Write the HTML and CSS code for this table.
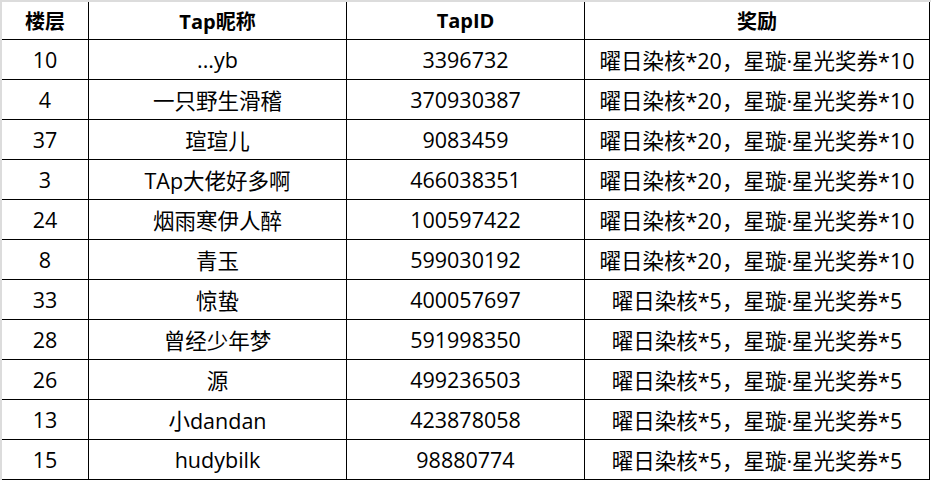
FILE: index.html
```html
<!DOCTYPE html>
<html lang="zh-CN">
<head>
<meta charset="utf-8">
<title>楼层奖励</title>
<link rel="stylesheet" href="styles.css">
</head>
<body>
<div class="sheet">
  <div class="grid">
    <div class="cell head">楼层</div>
    <div class="cell head">Tap昵称</div>
    <div class="cell head">TapID</div>
    <div class="cell head">奖励</div>

    <div class="cell">10</div><div class="cell">...yb</div><div class="cell">3396732</div><div class="cell">曜日染核*20，星璇·星光奖券*10</div>
    <div class="cell">4</div><div class="cell">一只野生滑稽</div><div class="cell">370930387</div><div class="cell">曜日染核*20，星璇·星光奖券*10</div>
    <div class="cell">37</div><div class="cell">瑄瑄儿</div><div class="cell">9083459</div><div class="cell">曜日染核*20，星璇·星光奖券*10</div>
    <div class="cell">3</div><div class="cell">TAp大佬好多啊</div><div class="cell">466038351</div><div class="cell">曜日染核*20，星璇·星光奖券*10</div>
    <div class="cell">24</div><div class="cell">烟雨寒伊人醉</div><div class="cell">100597422</div><div class="cell">曜日染核*20，星璇·星光奖券*10</div>
    <div class="cell">8</div><div class="cell">青玉</div><div class="cell">599030192</div><div class="cell">曜日染核*20，星璇·星光奖券*10</div>
    <div class="cell">33</div><div class="cell">惊蛰</div><div class="cell">400057697</div><div class="cell">曜日染核*5，星璇·星光奖券*5</div>
    <div class="cell">28</div><div class="cell">曾经少年梦</div><div class="cell">591998350</div><div class="cell">曜日染核*5，星璇·星光奖券*5</div>
    <div class="cell">26</div><div class="cell">源</div><div class="cell">499236503</div><div class="cell">曜日染核*5，星璇·星光奖券*5</div>
    <div class="cell">13</div><div class="cell">小dandan</div><div class="cell">423878058</div><div class="cell">曜日染核*5，星璇·星光奖券*5</div>
    <div class="cell">15</div><div class="cell">hudybilk</div><div class="cell">98880774</div><div class="cell">曜日染核*5，星璇·星光奖券*5</div>
  </div>
</div>
</body>
</html>
```
FILE: styles.css
```css
html, body {
  margin: 0;
  padding: 0;
  background: #ffffff;
}
.sheet {
  border-top: 2px solid #dcdcdc;
  border-left: 2px solid #dcdcdc;
  width: 929px;
}
.grid {
  display: grid;
  grid-template-columns: 87px 258px 238px 345px;
  grid-template-rows: 38px;
  grid-auto-rows: 40px;
  font-family: "Open Sans", "Noto Sans CJK SC", sans-serif;
  color: #000;
}
.cell {
  box-sizing: border-box;
  border-right: 1px solid #000;
  border-bottom: 1px solid #000;
  display: flex;
  align-items: center;
  justify-content: center;
  font-size: 21.5px;
  white-space: nowrap;
  overflow: hidden;
}
.head {
  font-size: 20px;
  font-weight: 700;
}
```
